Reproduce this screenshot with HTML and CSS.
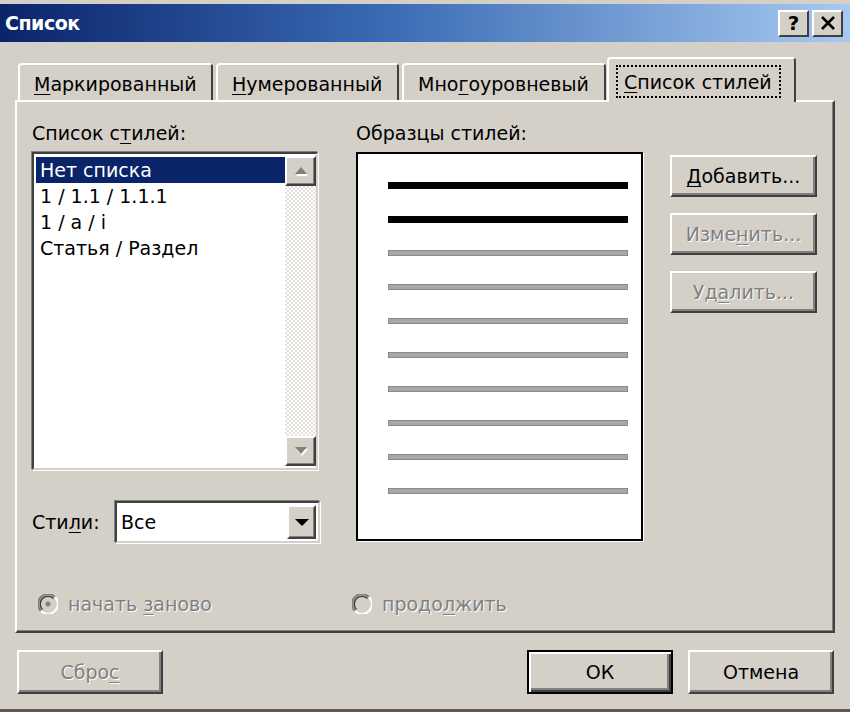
FILE: index.html
```html
<!DOCTYPE html>
<html lang="ru">
<head>
<meta charset="utf-8">
<title>Список</title>
<link rel="stylesheet" href="styles.css">
</head>
<body>
<div class="window">
  <div class="titlebar">
    <span class="title">Список</span>
    <div class="tb-buttons">
      <span class="tb-btn tb-help">?</span>
      <span class="tb-btn">
        <svg width="16" height="14" viewBox="0 0 16 14"><path d="M2 1 L14 13 M14 1 L2 13" stroke="#000" stroke-width="2.6" fill="none"/></svg>
      </span>
    </div>
  </div>

  <div class="tabs">
    <div class="tab t1"><u>М</u>аркированный</div>
    <div class="tab t2"><u>Н</u>умерованный</div>
    <div class="tab t3">Мно<u>г</u>оуровневый</div>
    <div class="tab t4 active"><span class="focus"><u>С</u>писок стилей</span></div>
  </div>

  <div class="panel">
    <div class="cols">
      <div class="col col-left">
        <div class="label">Список с<u>т</u>илей:</div>
        <div class="listbox">
          <div class="items">
            <div class="item sel">Нет списка</div>
            <div class="item">1 / 1.1 / 1.1.1</div>
            <div class="item">1 / a / i</div>
            <div class="item">Статья / Раздел</div>
          </div>
          <div class="scrollbar">
            <div class="sb-btn">
              <svg width="16" height="10" viewBox="0 0 16 10"><path d="M2 9 L8 2 L14 9 Z" fill="#fff" transform="translate(1,1)"/><path d="M2 8 L8 1 L14 8 Z" fill="#808080"/></svg>
            </div>
            <div class="sb-track"></div>
            <div class="sb-btn">
              <svg width="16" height="10" viewBox="0 0 16 10"><path d="M2 2 L14 2 L8 9 Z" fill="#fff" transform="translate(1,1)"/><path d="M2 1 L14 1 L8 8 Z" fill="#808080"/></svg>
            </div>
          </div>
        </div>
        <div class="combo-row">
          <span class="label">Сти<u>л</u>и:</span>
          <div class="combo">
            <span class="combo-text">Все</span>
            <span class="combo-btn">
              <svg width="16" height="9" viewBox="0 0 16 9"><path d="M1 1 L15 1 L8 8 Z" fill="#000"/></svg>
            </span>
          </div>
        </div>
      </div>

      <div class="col col-mid">
        <div class="label">Образцы стилей:</div>
        <div class="preview">
          <div class="pv-row"><span class="pv-line dark"></span></div>
          <div class="pv-row"><span class="pv-line dark"></span></div>
          <div class="pv-row"><span class="pv-line"></span></div>
          <div class="pv-row"><span class="pv-line"></span></div>
          <div class="pv-row"><span class="pv-line"></span></div>
          <div class="pv-row"><span class="pv-line"></span></div>
          <div class="pv-row"><span class="pv-line"></span></div>
          <div class="pv-row"><span class="pv-line"></span></div>
          <div class="pv-row"><span class="pv-line"></span></div>
          <div class="pv-row"><span class="pv-line"></span></div>
        </div>
      </div>

      <div class="col col-right">
        <div class="btn"><u>Д</u>обавить...</div>
        <div class="btn disabled">Изме<u>н</u>ить...</div>
        <div class="btn disabled">Уд<u>а</u>лить...</div>
      </div>
    </div>

    <div class="radios">
      <div class="radio r1">
        <svg width="20" height="20" viewBox="0 0 20 20">
          <path d="M3 17 A9.5 9.5 0 0 1 17 3" stroke="#808080" stroke-width="2" fill="none"/>
          <path d="M17 3 A9.5 9.5 0 0 1 3 17" stroke="#fff" stroke-width="2" fill="none"/>
          <circle cx="10" cy="10" r="7" fill="#d4d0c8"/>
          <path d="M4.5 15.5 A7.5 7.5 0 0 1 15.5 4.5" stroke="#404040" stroke-width="1.5" fill="none"/>
          <circle cx="10" cy="10" r="2.5" fill="#808080"/>
        </svg>
        <span class="dis">начать <u>з</u>аново</span>
      </div>
      <div class="radio r2">
        <svg width="20" height="20" viewBox="0 0 20 20">
          <path d="M3 17 A9.5 9.5 0 0 1 17 3" stroke="#808080" stroke-width="2" fill="none"/>
          <path d="M17 3 A9.5 9.5 0 0 1 3 17" stroke="#fff" stroke-width="2" fill="none"/>
          <circle cx="10" cy="10" r="7" fill="#d4d0c8"/>
          <path d="M4.5 15.5 A7.5 7.5 0 0 1 15.5 4.5" stroke="#404040" stroke-width="1.5" fill="none"/>
        </svg>
        <span class="dis">продо<u>л</u>жить</span>
      </div>
    </div>
  </div>

  <div class="footer">
    <div class="btn disabled">Сбро<u>с</u></div>
    <div class="spacer"></div>
    <div class="btn default">ОК</div>
    <div class="btn">Отмена</div>
  </div>
</div>
</body>
</html>
```

FILE: styles.css
```css
* { box-sizing: border-box; }

html, body {
  margin: 0;
  padding: 0;
  background: #d4d0c8;
}

body {
  font-family: "DejaVu Sans", "Liberation Sans", sans-serif;
  font-size: 19px;
  color: #000;
}

u { text-decoration: underline; text-underline-offset: 3px; }

.window {
  width: 850px;
  height: 712px;
  padding-top: 4px;
  background: #d4d0c8;
  border-bottom: 3px solid #5a5852;
  overflow: hidden;
}

/* Title bar */
.titlebar {
  height: 38px;
  display: flex;
  align-items: center;
  justify-content: space-between;
  padding: 0 7px 0 5px;
  background: linear-gradient(to right, #0a246a 0%, #3a6ab4 45%, #a6caf0 100%);
}

.title {
  color: #fff;
  font-weight: bold;
  font-size: 19px;
  letter-spacing: -0.5px;
}

.tb-buttons {
  display: flex;
  gap: 3px;
}

.tb-btn {
  width: 31px;
  height: 27px;
  display: flex;
  align-items: center;
  justify-content: center;
  background: #d4d0c8;
  border: 2px solid;
  border-color: #fff #404040 #404040 #fff;
  font-weight: bold;
  font-size: 20px;
  line-height: 1;
}

/* Tabs */
.tabs {
  display: flex;
  align-items: flex-end;
  height: 58px;
  padding-left: 18px;
  padding-top: 15px;
}

.tab {
  height: 37px;
  padding: 7px 0 0 14px;
  border: 2px solid;
  border-bottom: none;
  border-color: #fff #404040 #fff #fff;
  border-radius: 4px 4px 0 0;
  white-space: nowrap;
  line-height: 24px;
}

.t1 { width: 195px; margin-right: 3px; }
.t2 { width: 183px; margin-right: 3px; }
.t3 { width: 204px; }
.t4 { width: 189px; margin-left: 1px; }

.tab.active {
  position: relative;
  z-index: 1;
  height: 45px;
  margin-bottom: -2px;
  padding: 6px 0 0 7px;
  background: #d4d0c8;
}

.focus {
  display: inline-block;
  padding: 2px 7px 1px 6px;
  border: 2px dotted #000;
  line-height: 26px;
}

/* Panel */
.panel {
  width: 820px;
  height: 533px;
  margin-left: 15px;
  border: 2px solid;
  border-color: #fff #404040 #404040 #fff;
  box-shadow: inset -1px -1px 0 #808080;
  padding: 19px 0 0 15px;
}

.cols {
  display: flex;
  align-items: flex-start;
}

.col { display: flex; flex-direction: column; }

.label {
  line-height: 24px;
  height: 24px;
  white-space: nowrap;
}

.col-left { width: 288px; }
.col-left > .label, .col-mid > .label { margin-bottom: 7px; }

.listbox {
  width: 286px;
  height: 318px;
  display: flex;
  background: #fff;
  border: 2px solid;
  border-color: #404040 #d4d0c8 #d4d0c8 #404040;
  box-shadow: -1px -1px 0 #808080, 1px 1px 0 #fff;
}

.items {
  flex: 1;
  padding: 3px 0 0 2px;
}

.item {
  height: 26px;
  line-height: 26px;
  padding-left: 4px;
  white-space: nowrap;
}

.item.sel {
  background: #0a246a;
  color: #fff;
}

.scrollbar {
  width: 31px;
  display: flex;
  flex-direction: column;
  padding: 2px 0;
}

.sb-btn {
  height: 30px;
  display: flex;
  align-items: center;
  justify-content: center;
  background: #d4d0c8;
  border: 2px solid;
  border-color: #fff #404040 #404040 #fff;
  box-shadow: inset -1px -1px 0 #808080;
}

.sb-track {
  flex: 1;
  background-color: #fff;
  background-image: repeating-conic-gradient(#e4e1dc 0 25%, #fff 0 50%);
  background-size: 4px 4px;
}

.combo-row {
  display: flex;
  align-items: center;
  margin-top: 31px;
  height: 42px;
}

.combo-row .label { width: 83px; }

.combo {
  width: 205px;
  height: 42px;
  display: flex;
  align-items: center;
  background: #fff;
  border: 2px solid;
  border-color: #404040 #d4d0c8 #d4d0c8 #404040;
  box-shadow: -1px -1px 0 #808080, 1px 1px 0 #fff;
  padding: 2px;
}

.combo-text { flex: 1; padding-left: 2px; }

.combo-btn {
  width: 29px;
  height: 34px;
  display: flex;
  align-items: center;
  justify-content: center;
  background: #d4d0c8;
  border: 2px solid;
  border-color: #fff #404040 #404040 #fff;
  box-shadow: inset -1px -1px 0 #808080;
}

.col-mid { width: 287px; margin-left: 36px; }

.preview {
  height: 389px;
  background: #fff;
  border: 2px solid #000;
  box-shadow: 1px 1px 0 #fff;
  padding: 14px 0 0 30px;
}

.pv-row {
  height: 34px;
  display: flex;
  align-items: center;
}

.pv-line {
  display: block;
  width: 240px;
  height: 6px;
  background: #a8a8a8;
  border: 1px solid #8a8a8a;
}

.pv-line.dark {
  height: 7px;
  background: #000;
  border: none;
}

.col-right {
  width: 147px;
  margin-left: 27px;
  padding-top: 34px;
  gap: 16px;
}

/* Buttons */
.btn {
  height: 42px;
  display: flex;
  align-items: center;
  justify-content: center;
  background: #d4d0c8;
  border: 2px solid;
  border-color: #fff #404040 #404040 #fff;
  box-shadow: inset -2px -2px 0 #808080;
  white-space: nowrap;
}

.btn.disabled, .dis {
  color: #808080;
  text-shadow: 1px 1px 0 #fff;
}

/* Radios */
.radios {
  display: flex;
  align-items: center;
  margin-top: 49px;
  height: 24px;
}

.radio {
  display: flex;
  align-items: center;
  gap: 10px;
  white-space: nowrap;
}

.r1 { width: 314px; margin-left: 6px; }

/* Footer */
.footer {
  display: flex;
  align-items: center;
  margin-top: 17px;
  padding: 0 16px 0 17px;
}

.footer .btn { width: 146px; height: 44px; }
.spacer { flex: 1; }

.footer .btn.default {
  border: 2px solid #000;
  box-shadow: inset 2px 2px 0 #fff, inset -2px -2px 0 #404040, inset -4px -4px 0 #808080;
  margin-right: 15px;
}
```
